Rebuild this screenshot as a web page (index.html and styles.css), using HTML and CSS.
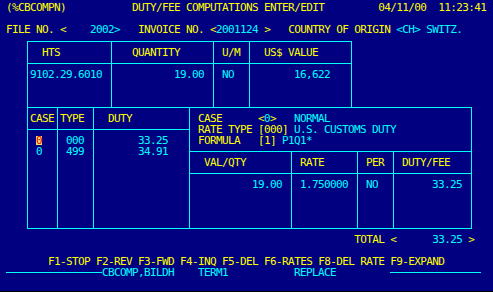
FILE: index.html
```html
<!DOCTYPE html>
<html>
<head>
<meta charset="utf-8">
<link rel="stylesheet" href="styles.css">
</head>
<body>
<div class="screen">

  <div class="head">
    <div class="line"> (%CBCOMPN)           DUTY/FEE COMPUTATIONS ENTER/EDIT         04/11/00  11:23:41</div>
    <div class="line"></div>
    <div class="line"> FILE NO. &lt;<span class="c">    2002&gt;</span>   INVOICE NO. &lt;<span class="c">2001124</span> &gt;   COUNTRY OF ORIGIN <span class="c">&lt;CH&gt; SWITZ.</span></div>
  </div>

  <!-- HTS / quantity / value box -->
  <div class="hts">
    <div class="cell">  HTS</div>
    <div class="cell">   QUANTITY</div>
    <div class="cell"> U/M</div>
    <div class="cell">  US$ VALUE</div>
    <div class="cell c">9102.29.6010</div>
    <div class="cell c">          19.00</div>
    <div class="cell c"> NO</div>
    <div class="cell c">       16,622</div>
  </div>

  <!-- duty cases and rate detail -->
  <div class="calc">
    <div class="duties">
      <div class="cell">CASE</div>
      <div class="cell">TYPE</div>
      <div class="cell">  DUTY</div>
      <div class="cell c"> <span class="cursor">0</span>
 0</div>
      <div class="cell c"> 000
 499</div>
      <div class="cell c">       33.25
       34.91</div>
    </div>
    <div class="rates">
      <div class="cell info"> CASE      &lt;<span class="c">0</span>&gt;   <span class="c">NORMAL</span>
 RATE TYPE [000] <span class="c">U.S. CUSTOMS DUTY</span>
 FORMULA   [1] <span class="c">P1Q1*</span></div>
      <div class="cell">  VAL/QTY</div>
      <div class="cell"> RATE</div>
      <div class="cell"> PER</div>
      <div class="cell"> DUTY/FEE</div>
      <div class="cell c">          19.00</div>
      <div class="cell c"> 1.750000</div>
      <div class="cell c"> NO</div>
      <div class="cell c">      33.25</div>
    </div>
  </div>

  <div class="line total">                                                           TOTAL &lt;<span class="c">      33.25</span> &gt;</div>

  <div class="line keys">        F1-STOP F2-REV F3-FWD F4-INQ F5-DEL F6-RATES F8-DEL RATE F9-EXPAND</div>
  <div class="status">
    <span class="rule left"></span>
    <span class="status-text c">CBCOMP,BILDH    TERM1           REPLACE</span>
    <span class="rule right"></span>
  </div>

</div>
</body>
</html>
```

FILE: styles.css
```css
html {
  background: #000;
}

body {
  margin: 0;
}

.screen {
  width: 493px;
  height: 291px;
  overflow: hidden;
  background: #000080;
  color: #ffff00;
  font-family: "DejaVu Sans Mono", monospace;
  font-size: 11px;
  line-height: 11px;
  letter-spacing: -0.62px;
}

.c {
  color: #00ffff;
}

.head {
  padding-top: 2px;
}

.line {
  height: 11px;
  white-space: pre;
}

/* tables: cyan shows through the 1px gaps as the box lines */
.hts {
  box-sizing: border-box;
  width: 325px;
  margin: 6px 0 0 27px;
  padding: 1px;
  display: grid;
  grid-template-columns: 83px 101px 35px 101px;
  grid-template-rows: 21px 43px;
  gap: 1px;
  background: #00ffff;
}

.calc {
  box-sizing: border-box;
  width: 445px;
  height: 122px;
  margin: -1px 0 0 27px;
  padding: 1px;
  display: grid;
  grid-template-columns: 161px 281px;
  gap: 1px;
  background: #00ffff;
}

.duties {
  display: grid;
  grid-template-columns: 29px 35px 95px;
  grid-template-rows: 21px 98px;
  gap: 1px;
}

.rates {
  display: grid;
  grid-template-columns: 101px 65px 35px 77px;
  grid-template-rows: 43px 21px 54px;
  gap: 1px;
}

.cell {
  background: #000080;
  padding: 5px 2px 0;
  white-space: pre;
}

.info {
  grid-column: 1 / -1;
}

.cursor {
  display: inline-block;
  vertical-align: top;
  height: 9px;
  margin-top: 1px;
  line-height: 9px;
  background: #f0e070;
  color: #e00000;
}

.total {
  margin-top: 5px;
}

.keys {
  margin-top: 11px;
}

.status {
  display: flex;
  align-items: center;
  height: 11px;
}

.status-text {
  width: 288px;
  white-space: pre;
}

.rule {
  height: 1px;
  background: #00ffff;
}

.rule.left {
  width: 96px;
  margin-left: 6px;
}

.rule.right {
  width: 91px;
}
```
